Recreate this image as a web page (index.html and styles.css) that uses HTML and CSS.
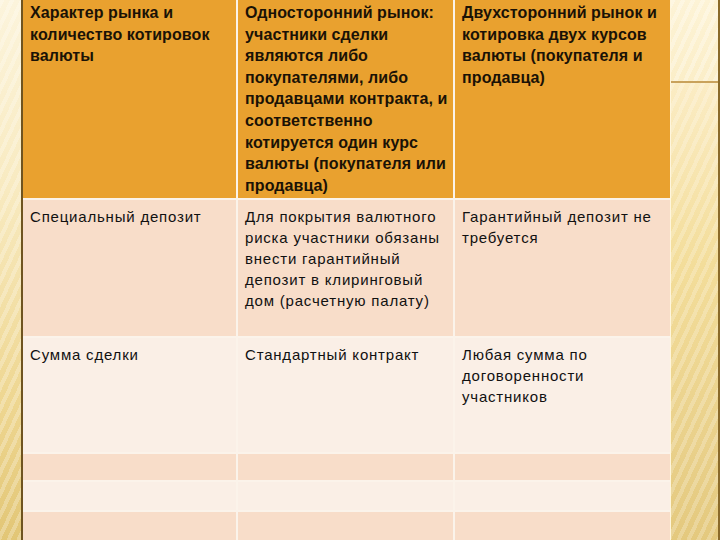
FILE: index.html
```html
<!DOCTYPE html>
<html lang="ru">
<head>
<meta charset="utf-8">
<link rel="stylesheet" href="styles.css">
</head>
<body>
<div class="slide">
  <div class="frame-left"></div>
  <div class="table">
    <div class="cell head">Характер рынка и<br>количество котировок<br>валюты</div>
    <div class="cell head">Односторонний рынок:<br>участники сделки<br>являются либо<br>покупателями, либо<br>продавцами контракта, и<br>соответственно<br>котируется один курс<br>валюты (покупателя или<br>продавца)</div>
    <div class="cell head">Двухсторонний рынок и<br>котировка двух курсов<br>валюты (покупателя и<br>продавца)</div>

    <div class="cell odd">Специальный депозит</div>
    <div class="cell odd">Для покрытия валютного<br>риска участники обязаны<br>внести гарантийный<br>депозит в клиринговый<br>дом (расчетную палату)</div>
    <div class="cell odd">Гарантийный депозит не<br>требуется</div>

    <div class="cell even">Сумма сделки</div>
    <div class="cell even">Стандартный контракт</div>
    <div class="cell even">Любая сумма по<br>договоренности<br>участников</div>

    <div class="cell odd"></div>
    <div class="cell odd"></div>
    <div class="cell odd"></div>

    <div class="cell even"></div>
    <div class="cell even"></div>
    <div class="cell even"></div>

    <div class="cell odd"></div>
    <div class="cell odd"></div>
    <div class="cell odd"></div>
  </div>
  <div class="frame-right">
    <div class="frame-right-top"></div>
    <div class="frame-right-bottom"></div>
  </div>
</div>
</body>
</html>
```
FILE: styles.css
```css
html, body {
  margin: 0;
  padding: 0;
  width: 720px;
  height: 540px;
  overflow: hidden;
  background: #fdf7ee;
}

.slide {
  display: flex;
  width: 720px;
  height: 540px;
}

.frame-left {
  width: 21px;
  flex: none;
  border-right: 2px solid #6f5420;
  background:
    repeating-linear-gradient(115deg, rgba(255,255,255,0.25) 0 4px, rgba(255,255,255,0) 4px 9px),
    linear-gradient(180deg, #fcf4dc 0%, #f8eac0 35%, #eed690 75%, #e2c676 100%);
}

.table {
  width: 647px;
  flex: none;
  display: grid;
  grid-template-columns: 213px 215px 215px;
  grid-template-rows: 198px 136px 114px 26px 28px 28px;
  column-gap: 2px;
  row-gap: 2px;
  background: #fbf3ea;
  font-family: "Liberation Sans", Arial, sans-serif;
  color: #111;
}

.cell {
  padding: 2px 4px 0 7px;
  font-size: 15px;
  line-height: 21.6px;
  overflow: hidden;
  white-space: nowrap;
}

.head {
  background: #e9a12f;
  font-size: 16px;
  font-weight: bold;
  letter-spacing: 0.1px;
  color: #1a1206;
}

.odd {
  background: #f8ddc9;
  padding-top: 6px;
  letter-spacing: 0.8px;
  line-height: 21px;
}

.even {
  background: #faefe6;
  padding-top: 6px;
  letter-spacing: 0.8px;
  line-height: 21px;
}

.frame-right {
  flex: 1;
  display: flex;
  flex-direction: column;
  border-left: 1px solid #fff6dc;
  border-right: 2px solid #8a6a2a;
}

.frame-right-top {
  height: 81px;
  flex: none;
  border-bottom: 2px solid #c9a25c;
  background:
    repeating-linear-gradient(115deg, rgba(255,255,255,0.3) 0 4px, rgba(255,255,255,0) 4px 9px),
    linear-gradient(180deg, #fdf3d6 0%, #fbeec8 100%);
}

.frame-right-bottom {
  flex: 1;
  background:
    repeating-linear-gradient(115deg, rgba(255,255,255,0.22) 0 4px, rgba(255,255,255,0) 4px 9px),
    linear-gradient(180deg, #fbecc4 0%, #f3dd9a 40%, #e9d08a 80%, #e4c97e 100%);
}
```
